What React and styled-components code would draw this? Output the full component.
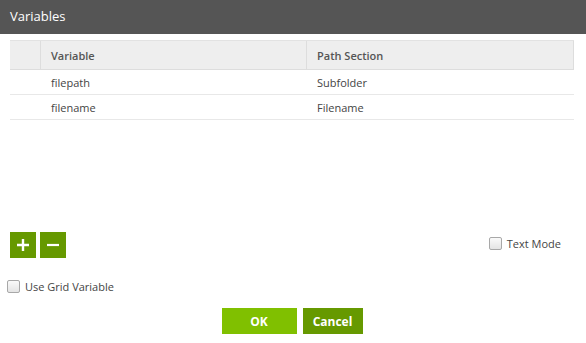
import React from 'react';
import styled, { createGlobalStyle } from 'styled-components';

const GlobalStyle = createGlobalStyle`
  html, body { margin: 0; padding: 0; background: #fff; }
  body { font-family: "Open Sans", "Liberation Sans", sans-serif; }
`;

const rows = [
  { name: 'filepath', section: 'Subfolder' },
  { name: 'filename', section: 'Filename' },
];

const App = () => {
  return (
    <Dialog>
      <GlobalStyle />
      <TitleBar>Variables</TitleBar>
      <Body>
        <Grid>
          <HeaderRow>
            <HeadCell />
            <HeadCell>Variable</HeadCell>
            <HeadCell>Path Section</HeadCell>
          </HeaderRow>
          {rows.map(r => (
            <Row key={r.name}>
              <Cell />
              <Cell>{r.name}</Cell>
              <Cell>{r.section}</Cell>
            </Row>
          ))}
        </Grid>
        <Toolbar>
          <IconButtons>
            <SquareButton aria-label="add">
              <svg width="14" height="14" viewBox="0 0 14 14">
                <path d="M7 1v12M1 7h12" stroke="#fff" strokeWidth="2.4" />
              </svg>
            </SquareButton>
            <SquareButton aria-label="remove">
              <svg width="14" height="14" viewBox="0 0 14 14">
                <path d="M1 7h12" stroke="#fff" strokeWidth="2.2" />
              </svg>
            </SquareButton>
          </IconButtons>
          <CheckLabel offset={4}>
            <Box />
            Text Mode
          </CheckLabel>
        </Toolbar>
        <GridOption>
          <CheckLabel>
            <Box />
            Use Grid Variable
          </CheckLabel>
        </GridOption>
        <Footer>
          <ActionButton primary>OK</ActionButton>
          <ActionButton>Cancel</ActionButton>
        </Footer>
      </Body>
    </Dialog>
  );
};

const Dialog = styled.div`
  width: 586px;
  height: 343px;
  background: #fff;
  overflow: hidden;
`;

const TitleBar = styled.div`
  height: 34px;
  background: #555555;
  color: #fff;
  font-size: 13px;
  line-height: 32px;
  padding-left: 10px;
  box-sizing: border-box;
`;

const Body = styled.div`
  padding: 6px 12px 0 10px;
`;

const Grid = styled.div`
  height: 192px;
  font-size: 11px;
  color: #333;
`;

const HeaderRow = styled.div`
  display: grid;
  grid-template-columns: 31px 266px 267px;
  height: 30px;
  background: #eeeeee;
  border-top: 1px solid #e2e2e2;
  border-bottom: 1px solid #dddddd;
  box-sizing: border-box;
`;

const HeadCell = styled.div`
  display: flex;
  align-items: center;
  padding-left: 10px;
  font-weight: 600;
  color: #555;
  border-right: 1px solid #dddddd;
`;

const Row = styled.div`
  display: grid;
  grid-template-columns: 31px 266px 267px;
  height: 25px;
  border-bottom: 1px solid #e8e8e8;
  box-sizing: border-box;
`;

const Cell = styled.div`
  display: flex;
  align-items: center;
  padding-left: 10px;
  color: #444;
`;

const Toolbar = styled.div`
  display: flex;
  justify-content: space-between;
  align-items: flex-start;
  height: 46px;
  padding-right: 13px;
`;

const IconButtons = styled.div`
  display: flex;
  gap: 4px;
`;

const SquareButton = styled.button`
  width: 26px;
  height: 26px;
  border: none;
  padding: 0;
  background: #669900;
  display: flex;
  align-items: center;
  justify-content: center;
`;

const CheckLabel = styled.label`
  display: flex;
  align-items: center;
  gap: 5px;
  font-size: 11px;
  color: #444;
  margin-top: ${p => p.offset || 1}px;
`;

const Box = styled.span`
  width: 11px;
  height: 11px;
  border: 1px solid #a8a8a8;
  border-radius: 2px;
  background: linear-gradient(#fafafa, #e4e4e4);
`;

const GridOption = styled.div`
  margin-left: -3px;
  height: 29px;
`;

const Footer = styled.div`
  display: flex;
  justify-content: center;
  gap: 6px;
`;

const ActionButton = styled.button`
  height: 26px;
  min-width: ${p => (p.primary ? '75px' : '60px')};
  border: none;
  background: ${p => (p.primary ? '#80c000' : '#669900')};
  color: #fff;
  font-family: "Open Sans", "Liberation Sans", sans-serif;
  font-weight: 700;
  font-size: 12px;
  padding: 0 8px;
`;

export default App;
